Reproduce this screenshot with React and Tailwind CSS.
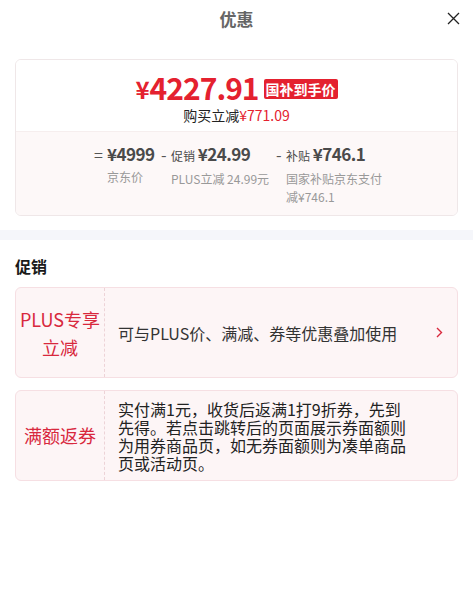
import React from "react";

const F = { fontFamily: '"Noto Sans CJK SC", "Noto Sans", sans-serif' };

export default function App() {
  return (
    <div className="w-[473px] h-[596px] bg-white overflow-hidden" style={F}>
      {/* header */}
      <div className="relative h-[37px] flex items-center justify-center">
        <span className="text-[17px] font-bold text-[#666]">优惠</span>
        <svg className="absolute right-[13px] top-[12px]" width="13" height="13" viewBox="0 0 13 13">
          <path d="M1 1L12 12M12 1L1 12" stroke="#222" strokeWidth="1.3" fill="none" />
        </svg>
      </div>

      <div className="px-[15px] pt-[22px]">
        <div className="border border-[#efe7e8] rounded-[6px] overflow-hidden">
          <div className="h-[71px] bg-white flex flex-col items-center pt-[12px]">
            <div className="flex items-end h-[30px]">
              <span className="text-[#e4212f] font-bold text-[24px] leading-[26px]">¥</span>
              <span className="text-[#e4212f] font-bold text-[30px] leading-[30px] tracking-[-1px]">4227.91</span>
              <span className="ml-[5px] mb-[3px] bg-[#e4212f] text-white font-bold text-[14px] leading-[20px] px-[2px] rounded-[2px]">国补到手价</span>
            </div>
            <div className="text-[14px] leading-[20px] text-[#222] mt-[3px]">
              购买立减<span className="text-[#e4212f]">¥771.09</span>
            </div>
          </div>
          <div className="h-[84px] bg-[#fdf8f8] border-t border-[#f6eeee] flex pl-[78px] pt-[10px]">
            <div className="flex w-[67px]">
              <span className="text-[16px] leading-[24px] text-[#555] w-[13px]">=</span>
              <div className="flex flex-col">
                <span className="text-[17px] leading-[24px] font-bold text-[#4a4a4a] tracking-[-0.5px]">¥4999</span>
                <span className="text-[12px] leading-[18px] text-[#999] mt-[2px]">京东价</span>
              </div>
            </div>
            <div className="flex w-[115px]">
              <span className="text-[16px] leading-[24px] text-[#555] w-[10px]">-</span>
              <div className="flex flex-col">
                <span className="leading-[24px] text-[#4a4a4a] whitespace-nowrap">
                  <span className="text-[12px]">促销 </span>
                  <span className="text-[17px] font-bold tracking-[-0.5px]">¥24.99</span>
                </span>
                <span className="text-[12px] leading-[18px] text-[#999] mt-[2px] whitespace-nowrap">PLUS立减 24.99元</span>
              </div>
            </div>
            <div className="flex">
              <span className="text-[16px] leading-[24px] text-[#555] w-[10px]">-</span>
              <div className="flex flex-col w-[100px]">
                <span className="leading-[24px] text-[#4a4a4a] whitespace-nowrap">
                  <span className="text-[12px]">补贴 </span>
                  <span className="text-[17px] font-bold tracking-[-0.5px]">¥746.1</span>
                </span>
                <span className="text-[12px] leading-[18px] text-[#999] mt-[2px]">国家补贴京东支付减¥746.1</span>
              </div>
            </div>
          </div>
        </div>
      </div>

      <div className="h-[10px] bg-[#f5f6fa] mt-[14px]" />

      <div className="px-[15px]">
        <div className="text-[16px] font-bold text-[#1a1a1a] leading-[24px] mt-[14px]">促销</div>

        <div className="mt-[9px] flex h-[91px] bg-[#fdf5f6] border border-[#f6dfe3] rounded-[6px]">
          <div className="w-[89px] flex items-center justify-center text-center text-[18px] leading-[28px] text-[#d8283d] border-r border-dashed border-[#edd3d7]">
            PLUS专享<br />立减
          </div>
          <div className="flex-1 flex items-center pl-[13px] text-[16px] text-[#333]">
            可与PLUS价、满减、券等优惠叠加使用
          </div>
          <div className="flex items-center pr-[14px]">
            <svg width="7" height="11" viewBox="0 0 7 11">
              <path d="M1 1L5.5 5.5L1 10" stroke="#d8283d" strokeWidth="1.4" fill="none" />
            </svg>
          </div>
        </div>

        <div className="mt-[12px] flex h-[91px] bg-[#fdf5f6] border border-[#f6dfe3] rounded-[6px]">
          <div className="w-[89px] flex items-center justify-center text-[18px] text-[#d8283d] border-r border-dashed border-[#edd3d7]">
            满额返券
          </div>
          <div className="flex items-center pl-[13px]">
            <div className="w-[292px] text-[16px] leading-[18px] text-[#222]">
              实付满1元，收货后返满1打9折券，先到先得。若点击跳转后的页面展示券面额则为用券商品页，如无券面额则为凑单商品页或活动页。
            </div>
          </div>
        </div>
      </div>
    </div>
  );
}
